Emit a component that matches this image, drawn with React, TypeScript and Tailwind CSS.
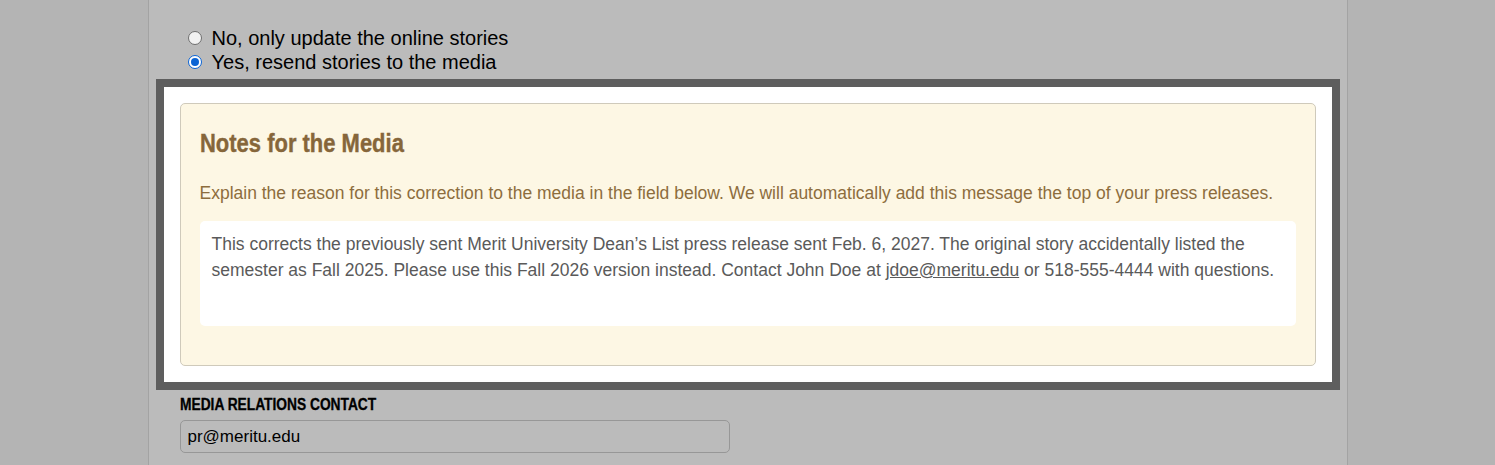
import React from "react";

const SANS = "font-['Liberation_Sans',Arial,sans-serif]";

function Radio({ checked }: { checked?: boolean }) {
  if (checked) {
    return (
      <span className="flex h-[14px] w-[14px] items-center justify-center rounded-full border-[1.5px] border-[#0a63d4] bg-white">
        <span className="h-[8px] w-[8px] rounded-full bg-[#0a63d4]" />
      </span>
    );
  }
  return <span className="h-[14px] w-[14px] rounded-full border-[1.5px] border-[#6e6e6e] bg-[#f2f2f2]" />;
}

export default function App() {
  return (
    <div className={`min-h-[465px] bg-[#b4b4b4] ${SANS}`}>
      <div className="mx-auto min-h-[465px] w-[1200px] border-x border-[#a3a3a3] bg-[#bbbbbb] px-[31px] pt-[26px]">
        <div className="flex flex-col pl-[8px] text-[20px] leading-[24px] text-black">
          <label className="flex items-center gap-[10px]">
            <Radio />
            <span>No, only update the online stories</span>
          </label>
          <label className="flex items-center gap-[10px]">
            <Radio checked />
            <span>Yes, resend stories to the media</span>
          </label>
        </div>

        <div className="-mx-6 mt-[5px] border-8 border-[#5e5e5e] bg-white p-4">
          <div className="rounded-[5px] border border-[#cfcabb] bg-[#fdf7e4] px-[19px] pb-[39px] pt-[24px]">
            <h2 className="origin-left scale-x-[0.845] text-[26px] font-bold leading-[30px] text-[#86663a] [-webkit-text-stroke:0.4px_#86663a]">
              Notes for the Media
            </h2>
            <p className="mt-[25px] text-[17.5px] leading-[20px] text-[#8d6d3d]">
              Explain the reason for this correction to the media in the field below. We will automatically add this
              message the top of your press releases.
            </p>
            <div className="mt-[18px] h-[105px] rounded-[5px] bg-white px-[12px] py-[10px] text-[17.5px] leading-[26px] text-[#5a5a5a]">
              This corrects the previously sent Merit University Dean’s List press release sent Feb. 6, 2027. The
              original story accidentally listed the
              <br />
              semester as Fall 2025. Please use this Fall 2026 version instead. Contact John Doe at{" "}
              <span className="underline">jdoe@meritu.edu</span> or 518-555-4444 with questions.
            </div>
          </div>
        </div>

        <div className="mt-[7px] origin-left scale-x-[0.86] text-[16px] font-bold leading-[16px] text-black [-webkit-text-stroke:0.3px_#000]">
          MEDIA RELATIONS CONTACT
        </div>
        <div className="mt-[7px] flex h-[33px] w-[550px] items-center rounded-[5px] border border-[#979797] px-[7px] text-[17px] text-black">
          pr@meritu.edu
        </div>
      </div>
    </div>
  );
}
